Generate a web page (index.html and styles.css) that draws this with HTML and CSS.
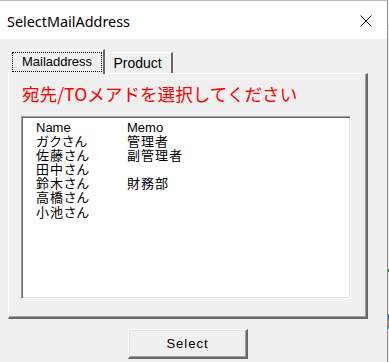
FILE: index.html
```html
<!DOCTYPE html>
<html lang="ja">
<head>
<meta charset="utf-8">
<title>SelectMailAddress</title>
<link rel="stylesheet" href="styles.css">
</head>
<body>
<div class="screen">
  <div class="window">
    <div class="titlebar">
      <span class="title">SelectMailAddress</span>
      <svg class="close" width="12" height="12" viewBox="0 0 12 12" aria-hidden="true">
        <path d="M0.5 0.5L11.5 11.5M11.5 0.5L0.5 11.5" stroke="#000" stroke-width="1" fill="none"/>
      </svg>
    </div>
    <div class="client">
      <div class="tabs">
        <div class="tab tab-active"><span class="focus">Mailaddress</span></div>
        <div class="tab tab-idle">Product</div>
      </div>
      <div class="panel">
        <h1 class="heading">宛先/TOメアドを選択してください</h1>
        <div class="listbox">
          <div class="rows">
            <span>Name</span><span>Memo</span>
            <span class="ja">ガクさん</span><span class="ja">管理者</span>
            <span class="ja">佐藤さん</span><span class="ja">副管理者</span>
            <span class="ja">田中さん</span><span></span>
            <span class="ja">鈴木さん</span><span class="ja">財務部</span>
            <span class="ja">高橋さん</span><span></span>
            <span class="ja">小池さん</span><span></span>
          </div>
        </div>
      </div>
      <div class="actions">
        <button class="btn" type="button">Select</button>
      </div>
    </div>
  </div>
  <div class="edge"></div>
</div>
</body>
</html>
```

FILE: styles.css
```css
* {
  box-sizing: border-box;
  margin: 0;
  padding: 0;
}

html,
body {
  width: 389px;
  height: 362px;
  overflow: hidden;
}

body {
  background: #f0f0f0;
  font-family: "Liberation Sans", "Noto Sans CJK JP", sans-serif;
  color: #000;
}

.screen {
  display: flex;
  width: 389px;
  height: 362px;
}

.window {
  width: 388px;
  height: 362px;
  border-top: 1px solid #b9b9b9;
  border-right: 1px solid #8c8c8c;
  background: #f0f0f0;
  display: flex;
  flex-direction: column;
}

.edge {
  width: 1px;
  height: 362px;
  background: linear-gradient(to bottom,
    #ffffff 0, #ffffff 25px, #c8c8c8 25px, #c8c8c8 26px,
    #f3f3f3 26px, #f3f3f3 269px, #2f7d4f 269px, #2f7d4f 272px,
    #f3f3f3 272px, #f3f3f3 314px, #3b7fc0 314px, #3b7fc0 320px,
    #c98a2d 320px, #c98a2d 326px, #3b7fc0 326px, #3b7fc0 329px,
    #f3f3f3 329px);
}

.titlebar {
  height: 38px;
  background: #ffffff;
  display: flex;
  align-items: center;
  justify-content: space-between;
  padding: 0 15px 0 7px;
}

.title {
  font-family: "Noto Sans", "Open Sans", sans-serif;
  font-size: 14.4px;
  color: #000;
  margin-top: 2px;
}

.close {
  display: block;
  margin-top: 2px;
}

.client {
  flex: 1;
  padding: 10px 0 0 8px;
}

.tabs {
  display: flex;
  align-items: flex-end;
  padding-left: 1px;
  height: 24px;
}

.tab {
  background: #f0f0f0;
  font-size: 13px;
  display: flex;
  align-items: center;
  justify-content: center;
}

.tab-active {
  position: relative;
  z-index: 1;
  width: 96px;
  height: 25px;
  margin-bottom: -1px;
  border-top: 1px solid #ffffff;
  border-left: 1px solid #ffffff;
  border-right: 2px solid #696969;
  padding: 2px 1px 2px 2px;
}

.focus {
  width: 90px;
  height: 20px;
  border: 1px dotted #000;
  display: flex;
  align-items: center;
  justify-content: center;
  padding-bottom: 1px;
}

.tab-idle {
  width: 68px;
  height: 21px;
  border-top: 1px solid #ffffff;
  border-right: 2px solid #696969;
  padding: 0 1px 0 0;
  font-size: 14px;
}

.panel {
  width: 360px;
  height: 246px;
  border-top: 1px solid #ffffff;
  border-left: 1px solid #ffffff;
  border-right: 2px solid #696969;
  border-bottom: 2px solid #696969;
  box-shadow: inset -1px -1px 0 #a0a0a0;
  padding: 9px 0 0 12px;
}

.heading {
  font-family: "Noto Sans CJK JP", sans-serif;
  font-weight: normal;
  font-size: 17.6px;
  line-height: 22px;
  color: #ff0000;
  padding-left: 1px;
  white-space: nowrap;
}

.listbox {
  margin-top: 11px;
  width: 330px;
  height: 183px;
  background: #ffffff;
  border: 1px solid;
  border-color: #a0a0a0 #ffffff #ffffff #a0a0a0;
  box-shadow: inset 1px 1px 0 #696969, inset -1px -1px 0 #e3e3e3;
}

.rows {
  display: grid;
  grid-template-columns: 91px auto;
  padding: 4px 0 0 14px;
  font-size: 13px;
  line-height: 14.1px;
  white-space: nowrap;
}

.ja {
  letter-spacing: 1px;
  font-feature-settings: "palt";
}

.actions {
  padding: 10px 0 0 120px;
}

.btn {
  width: 120px;
  height: 30px;
  background: #f0f0f0;
  border-style: solid;
  border-width: 1px 2px 2px 1px;
  border-color: #ffffff #696969 #696969 #ffffff;
  box-shadow: inset 1px 1px 0 #e3e3e3, inset -1px -1px 0 #a0a0a0;
  font-family: "Liberation Sans", sans-serif;
  font-size: 13px;
  font-weight: normal;
  letter-spacing: 1px;
  color: #000;
}
```
